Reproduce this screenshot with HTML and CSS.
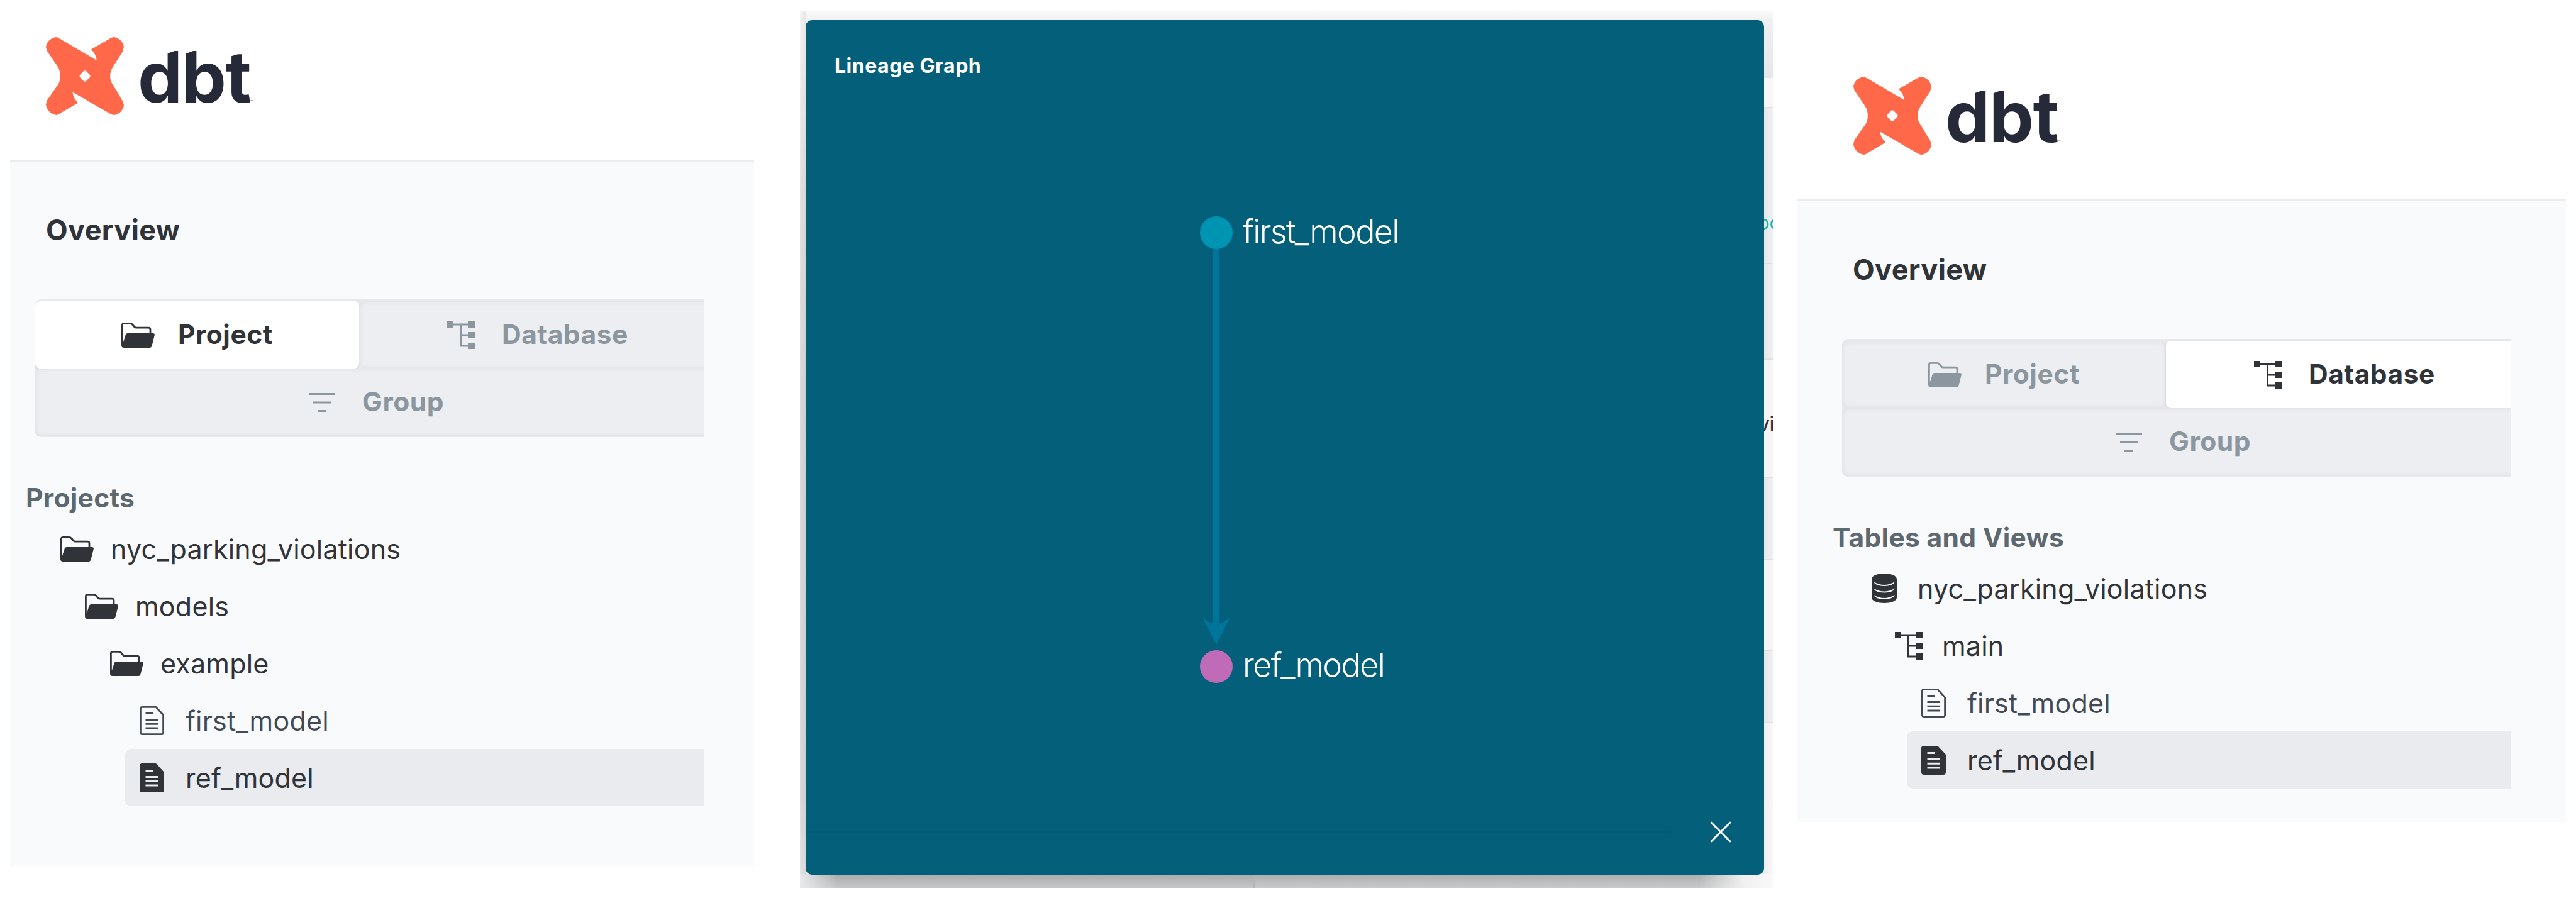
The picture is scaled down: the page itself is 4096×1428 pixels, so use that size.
FILE: index.html
```html
<!DOCTYPE html>
<html lang="en">
<head>
<meta charset="utf-8">
<title>dbt docs</title>
<link rel="stylesheet" href="styles.css">
</head>
<body>
<svg class="defs" aria-hidden="true">
  <symbol id="mark" viewBox="0 0 149 149">
    <path fill="#ff694a" fill-rule="evenodd" d="M20 0C23 1 26 3 28 4L97 44.500C96.500 37 93 30 86.500 23.500L122 3C125 1 128 0 130 0C139 1 148 9 149 19L147 27L128 57C121 67 121 82 128 91L147 123L149 130C148 140 139 148 130 149C128 149 125 148 122 146L51 105C52 113 55 119 61.500 125.500L28 145C26 147 23 148 20 149C10 148 1 139 0 129L2 121L23 91C29 82 29 67 23 57L2 26L0 19C1 9 10 1 20 0ZM74.500 64C73 64 72 65 71 66L65 72Q63.500 74.500 65 77L71 83Q74.500 87 78 83L84 77Q85.500 74.500 84 72L78 66C77 65 76 64 74.500 64Z"/>
  </symbol>
  <symbol id="folder" viewBox="0 0 53 40">
    <path fill="none" stroke="currentColor" stroke-width="2.800" stroke-linejoin="round" d="M1.400 36V4Q1.400 1.400 4 1.400H14Q16 1.400 17.500 3L20.500 6.500Q22 8.200 24 8.200H43Q46 8.200 46 11V18"/>
    <path fill="currentColor" d="M10 17H50Q53.500 17 52.800 20L48.500 37Q47.500 40 45 40H4Q0 40 0 36V32L3 31L6.500 20Q7.500 17 10 17Z"/>
  </symbol>
  <symbol id="tree" viewBox="0 0 44 44">
    <path fill="currentColor" d="M0 0H10V3.500H33V0H44V10H33V6.500H23V20.500H33V17H44V27H33V23.500H23V37.500H33V34H44V44H33V40.500H20V6.500H10V10H0Z"/>
  </symbol>
  <symbol id="lines" viewBox="0 0 42 30">
    <path fill="currentColor" d="M0 0H42V3H0ZM7 13.500H35V16.500H7ZM14 27H28V30H14Z"/>
  </symbol>
  <symbol id="page" viewBox="0 0 39 46">
    <path fill="none" stroke="currentColor" stroke-width="2.800" stroke-linejoin="round" d="M4 1.400H26L37.600 14V42Q37.600 44.600 35 44.600H4Q1.400 44.600 1.400 42V4Q1.400 1.400 4 1.400Z"/>
    <path fill="currentColor" d="M9.500 10H22V13H9.500ZM9.500 20H30V23H9.500ZM9.500 26.700H30V29.700H9.500ZM9.500 33.400H30V36.400H9.500Z"/>
  </symbol>
  <symbol id="page-solid" viewBox="0 0 39 46">
    <path fill="currentColor" fill-rule="evenodd" d="M4 0H26L39 14V42Q39 46 35 46H4Q0 46 0 42V4Q0 0 4 0ZM9.500 10V13H22V10ZM9.500 20V23H30V20ZM9.500 26.700V29.700H30V26.700ZM9.500 33.400V36.400H30V33.400Z"/>
  </symbol>
  <symbol id="db" viewBox="0 0 40 47">
    <path fill="currentColor" d="M0 9C0 -3 40 -3 40 9V38C40 50 0 50 0 38Z"/>
    <path class="db-gap" d="M3 13Q20 23 37 13Q34 20 20 20Q6 20 3 13ZM3 23.500Q20 33.500 37 23.500Q34 30.500 20 30.500Q6 30.500 3 23.500ZM3 34Q20 44 37 34Q34 41 20 41Q6 41 3 34Z"/>
  </symbol>
</svg>
<main class="board">
  <section class="nav nav-project">
    <header class="brand"><svg class="mark"><use href="#mark"/></svg><span class="wordmark">dbt</span><span class="tm">™</span></header>
    <h2 class="overview">Overview</h2>
    <div class="tabs">
      <div class="tab tab-a on"><svg class="i-folder"><use href="#folder"/></svg><span>Project</span></div>
      <div class="tab tab-b"><svg class="i-tree"><use href="#tree"/></svg><span>Database</span></div>
      <div class="tab tab-c"><svg class="i-lines"><use href="#lines"/></svg><span>Group</span></div>
    </div>
    <h3 class="heading">Projects</h3>
    <ul class="files">
      <li class="row l1"><span class="ico"><svg class="i-folder"><use href="#folder"/></svg></span><span>nyc_parking_violations</span></li>
      <li class="row l2"><span class="ico"><svg class="i-folder"><use href="#folder"/></svg></span><span>models</span></li>
      <li class="row l3"><span class="ico"><svg class="i-folder"><use href="#folder"/></svg></span><span>example</span></li>
      <li class="row l4 soft"><span class="ico"><svg class="i-page"><use href="#page"/></svg></span><span>first_model</span></li>
      <li class="row l4 picked"><span class="ico"><svg class="i-page"><use href="#page-solid"/></svg></span><span>ref_model</span></li>
    </ul>
  </section>

  <section class="lineage">
    <div class="behind-left"></div>
    <div class="behind-right">
      <div class="s s1"></div><div class="s s2"></div><div class="s s3"><span class="peek teal">oc</span></div><div class="s s4"></div>
      <div class="s s5"><span class="peek dark">vi</span></div><div class="s s6"></div><div class="s s7"></div><div class="s s8"></div><div class="s s9"></div>
    </div>
    <div class="behind-bottom"></div>
    <div class="card">
      <h1 class="title">Lineage Graph</h1>
      <svg class="edge" viewBox="0 0 60 690"><path fill="#00759c" d="M24.900 0H35.100V621.500Q44 620 52.500 610.500L30 655L7.500 610.500Q16 620 24.900 621.500Z"/></svg>
      <i class="dot dot-first"></i><span class="label label-first">first_model</span>
      <i class="dot dot-ref"></i><span class="label label-ref">ref_model</span>
      <footer class="foot"><i class="rule"></i><svg class="close" viewBox="0 0 32 32"><path d="M1.200 1.200L30.800 30.800M30.800 1.200L1.200 30.800"/></svg></footer>
    </div>
  </section>

  <section class="nav nav-database">
    <header class="brand"><svg class="mark"><use href="#mark"/></svg><span class="wordmark">dbt</span><span class="tm">™</span></header>
    <h2 class="overview">Overview</h2>
    <div class="tabs">
      <div class="tab tab-a"><svg class="i-folder"><use href="#folder"/></svg><span>Project</span></div>
      <div class="tab tab-b on"><svg class="i-tree"><use href="#tree"/></svg><span>Database</span></div>
      <div class="tab tab-c"><svg class="i-lines"><use href="#lines"/></svg><span>Group</span></div>
    </div>
    <h3 class="heading">Tables and Views</h3>
    <ul class="files">
      <li class="row l1"><span class="ico"><svg class="i-db"><use href="#db"/></svg></span><span>nyc_parking_violations</span></li>
      <li class="row l2"><span class="ico"><svg class="i-tree"><use href="#tree"/></svg></span><span>main</span></li>
      <li class="row l3 soft"><span class="ico"><svg class="i-page"><use href="#page"/></svg></span><span>first_model</span></li>
      <li class="row l3 picked"><span class="ico"><svg class="i-page"><use href="#page-solid"/></svg></span><span>ref_model</span></li>
    </ul>
  </section>
</main>
</body>
</html>
```
FILE: styles.css
```css
* { box-sizing: border-box; margin: 0; padding: 0; }
body {
  width: 4096px; height: 1428px; overflow: hidden; background: #fff;
  font-family: Inter, "Liberation Sans", sans-serif; color: #303338;
}
.defs { position: absolute; width: 0; height: 0; }
.board { display: flex; align-items: flex-start; padding-left: 16px; height: 1428px; }
svg { display: block; flex: none; }

/* sidebar */
.nav { display: flex; flex-direction: column; background: #f9fafc; }
.nav-project { width: 1183px; height: 1377px; padding-left: 1px; }
.nav-database { width: 1223px; height: 1307px; margin-left: 38px; padding-left: 33px; }
.brand {
  display: flex; height: 257px; padding: 59px 0 0 57px; margin-left: -1px;
  background: #fff; border-bottom: 3px solid #ebecef;
}
.nav-database .brand { height: 320px; padding: 122px 0 0 90px; margin-left: -33px; }
.mark { width: 124px; height: 124px; }
/* the ascenders are cut at a slant */
.wordmark {
  margin-left: 22px; font-size: 113px; font-weight: 700; line-height: 126px; height: 130px;
  letter-spacing: -1.500px; color: #262a38;
  clip-path: polygon(-10px 0, 40px 28.500px, 70px 18px, 71px 28px, 73px 27.500px, 102px 17px, 110px 40px, 134px 35px, 166px 25px, 175px 40px, 220px 40px, 220px 130px, -10px 130px);
}
.tm { font-size: 7px; color: #262a38; margin-top: 99px; }
.overview {
  height: 219px; padding-left: 56px; line-height: 218px;
  font-size: 45px; font-weight: 700; letter-spacing: .4px;
}
.tabs {
  display: grid; grid-template-columns: 515px 562px; grid-template-rows: 107px 108px;
  width: 1063px; margin-left: 39px; height: 219px; padding: 3px 0 1px; overflow: hidden;
  font-size: 42.500px; font-weight: 700; letter-spacing: .5px; border-radius: 9px 0 0 9px;
  background: #e8e9ed;
}
.tab {
  display: flex; align-items: center; background: #edeef2; color: #8b969e;
  border-radius: 8px; box-shadow: inset 0 0 9px rgba(40, 50, 60, .09);
}
.tab span { position: relative; top: -1px; }
.tab-c { grid-column: 1 / 3; padding: 0 0 1px 435px; gap: 43px; }
.tab-a { padding-left: 137px; gap: 37px; }
.tab-b { padding-left: 140px; gap: 43px; }
.tab.on { background: #fff; color: #303338; box-shadow: 0 1px 3px rgba(40, 50, 60, .15); }
.i-folder { width: 53px; height: 40px; }
.i-tree { width: 44px; height: 44px; }
.i-lines { width: 42px; height: 30px; }
.i-page { width: 39px; height: 46px; }
.i-db { width: 40px; height: 47px; }
.db-gap { fill: #f9fafc; }
.heading {
  height: 132px; padding-left: 24px; line-height: 193px;
  font-size: 42.500px; font-weight: 700; letter-spacing: .3px; color: #5d686f;
}
.files { list-style: none; width: 1102px; }
.row { display: flex; align-items: center; height: 91px; font-size: 43px; font-weight: 400; letter-spacing: .2px; }
.ico { display: flex; justify-content: center; width: 53px; margin-right: 27px; }
.l1 { padding-left: 79px; }
.l2 { padding-left: 118px; }
.l3 { padding-left: 158px; }
.l4 { padding-left: 198px; }
.soft { color: #434a54; }
.picked { background: #e9ebee; border-radius: 9px 0 0 9px; }
.l4.picked { margin-left: 182px; padding-left: 16px; }
.l3.picked { margin-left: 142px; padding-left: 16px; }

/* lineage window over the page behind it */
.lineage {
  position: relative; width: 1547px; height: 1395px; margin: 17px 0 0 73px;
  overflow: hidden; background: linear-gradient(#fafafa, #f1f1f1 15px, #f1f1f1);
}
.behind-left {
  position: absolute; left: 0; top: 0; width: 10px; height: 1395px;
  background: linear-gradient(90deg, rgba(0,0,0,.02), rgba(0,0,0,.08)), linear-gradient(#fafafa, #e6e6e6 300px, #dedfe0 600px, #dedfe0 1250px, #e9eaeb);
}
.behind-right {
  position: absolute; right: 0; top: 0; width: 15px; height: 1395px; padding-top: 16px;
  display: flex; flex-direction: column;
}
.s { position: relative; flex: none; overflow: hidden; background: linear-gradient(90deg, #e4e6e8, #f0f1f3); border-bottom: 2px solid #dddfe1; }
.s1 { height: 91px; border: 0; background: linear-gradient(#eff0f2, #e6e7e9); }
.s2 { height: 48px; background: #f7f7f7; }
.s3 { height: 248px; }
.s4 { height: 152px; }
.s5 { height: 188px; background: #f5f5f5; }
.s6 { height: 131px; }
.s7 { height: 145px; background: #f5f5f5; }
.s8 { height: 114px; }
.s9 { flex: 1; background: linear-gradient(90deg, #eee, #f8f8f8); border: 0; }
.peek { position: absolute; line-height: 36px; white-space: nowrap; }
.teal { left: -9px; top: 164px; font-size: 31px; color: #13b5b5; }
.dark { left: -8px; top: 84px; font-size: 31px; font-weight: 500; }
.behind-bottom {
  position: absolute; left: 0; bottom: 0; width: 100%; height: 22px;
  background:
    linear-gradient(90deg, #e9eaeb, rgba(233,234,235,0) 60px, rgba(240,240,240,0) 1430px, #f0f0f0 1500px, #f9f9f9 1547px),
    linear-gradient(90deg, transparent 721px, #b3b5b6 721px, #b3b5b6 723px, rgba(255,255,255,.04) 723px),
    linear-gradient(#a9abaa, #c6c7c9);
}
.card {
  position: absolute; left: 9px; top: 15px; width: 1524px; height: 1359px;
  background: #035f7a; border-radius: 10px; color: #fff; padding: 53px 46px;
}
.title { font-size: 32px; line-height: 40px; font-weight: 700; letter-spacing: .5px; }
.edge { position: absolute; left: 623px; top: 338px; width: 60px; height: 690px; }
.dot { position: absolute; left: 627px; width: 52px; height: 52px; border-radius: 50%; }
.dot-first { top: 312px; background: #0094b3; }
.dot-ref { top: 1002px; background: #bf6bb8; }
.label { position: absolute; left: 695px; font-size: 52px; line-height: 60px; font-weight: 300; letter-spacing: -1.650px; white-space: nowrap; }
.label-first { top: 307px; }
.label-ref { top: 996px; }
.foot { position: absolute; left: 0; bottom: 52px; width: 100%; height: 32px; display: flex; align-items: center; }
.rule { width: 1374px; height: 3px; background: #035b75; }
.close { width: 32px; height: 32px; margin-left: 65px; fill: none; stroke: #fff; stroke-width: 3; stroke-linecap: round; overflow: visible; }
```
